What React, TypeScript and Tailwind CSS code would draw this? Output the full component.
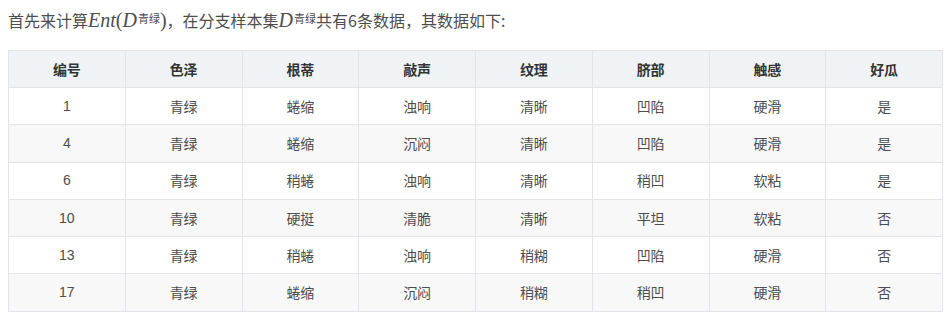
import React from "react";

const headers = ["编号", "色泽", "根蒂", "敲声", "纹理", "脐部", "触感", "好瓜"];
const rows = [
  ["1", "青绿", "蜷缩", "浊响", "清晰", "凹陷", "硬滑", "是"],
  ["4", "青绿", "蜷缩", "沉闷", "清晰", "凹陷", "硬滑", "是"],
  ["6", "青绿", "稍蜷", "浊响", "清晰", "稍凹", "软粘", "是"],
  ["10", "青绿", "硬挺", "清脆", "清晰", "平坦", "软粘", "否"],
  ["13", "青绿", "稍蜷", "浊响", "稍糊", "凹陷", "硬滑", "否"],
  ["17", "青绿", "蜷缩", "沉闷", "稍糊", "稍凹", "硬滑", "否"],
];

function Sup() {
  return (
    <sup className="text-[11px] not-italic relative -top-[4px] ml-[1px] font-['Noto_Sans_CJK_SC',sans-serif]">
      青绿
    </sup>
  );
}

export default function App() {
  return (
    <div className="w-[952px] h-[323px] bg-white px-2 text-[#4d4d4d] font-['Noto_Sans_CJK_SC','Noto_Sans',sans-serif]">
      <p className="h-[40px] pt-[7px] text-[16px] leading-[26px] whitespace-nowrap">
        首先来计算
        <span className="italic text-[20px] font-['Liberation_Serif',serif]">Ent</span>
        <span className="text-[20px] font-['Liberation_Serif',serif]">(</span>
        <span className="italic text-[20px] font-['Liberation_Serif',serif]">D</span>
        <Sup />
        <span className="text-[20px] font-['Liberation_Serif',serif]">)</span>
        ，在分支样本集
        <span className="italic text-[20px] font-['Liberation_Serif',serif]">D</span>
        <Sup />
        共有6条数据，其数据如下:
      </p>
      <table className="mt-[10px] w-[935px] border-collapse table-fixed text-[14px]">
        <thead>
          <tr className="bg-[#eff3f5] h-[37px]">
            {headers.map((h) => (
              <th key={h} className="border border-[#e1e4e8] font-bold text-[#333] text-center">
                {h}
              </th>
            ))}
          </tr>
        </thead>
        <tbody>
          {rows.map((r, i) => (
            <tr key={i} className={i % 2 === 1 ? "bg-[#f8f8f8] h-[37.3px]" : "bg-white h-[37.3px]"}>
              {r.map((c, j) => (
                <td
                  key={j}
                  className={
                    j === 0
                      ? "border border-[#e1e4e8] text-center text-[#4d4d4d] font-['Liberation_Sans','Noto_Sans_CJK_SC',sans-serif]"
                      : "border border-[#e1e4e8] text-center text-[#4d4d4d]"
                  }
                >
                  {c}
                </td>
              ))}
            </tr>
          ))}
        </tbody>
      </table>
    </div>
  );
}
